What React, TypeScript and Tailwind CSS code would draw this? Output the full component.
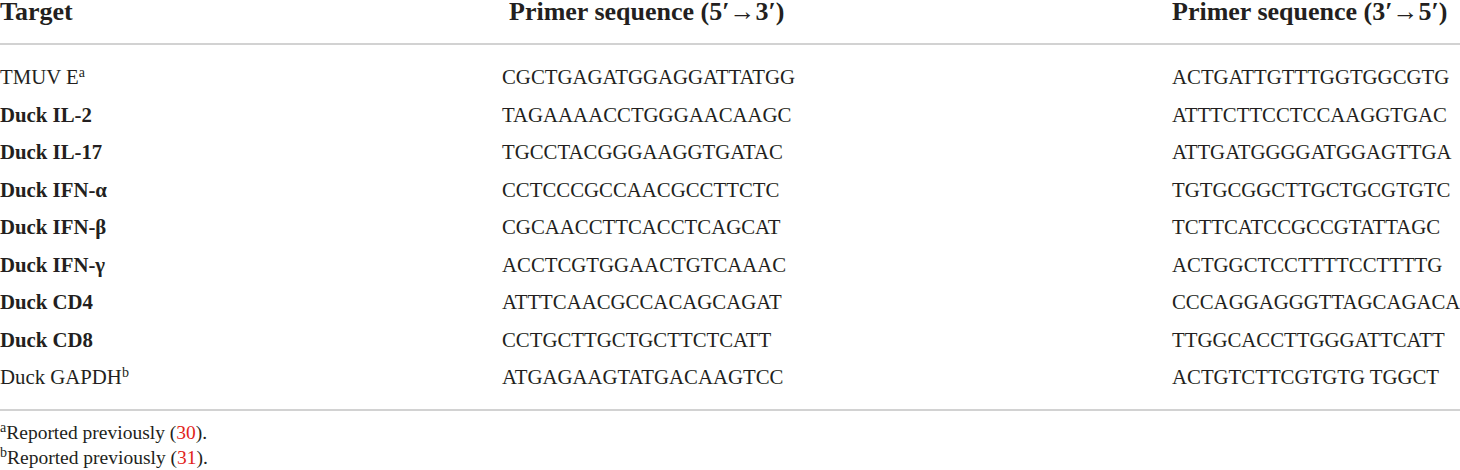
import React from "react";

type Row = { label: React.ReactNode; bold: boolean; f: string; r: string };

const rows: Row[] = [
  { label: <>TMUV E<sup className="text-[14px]">a</sup></>, bold: false, f: "CGCTGAGATGGAGGATTATGG", r: "ACTGATTGTTTGGTGGCGTG" },
  { label: "Duck IL-2", bold: true, f: "TAGAAAACCTGGGAACAAGC", r: "ATTTCTTCCTCCAAGGTGAC" },
  { label: "Duck IL-17", bold: true, f: "TGCCTACGGGAAGGTGATAC", r: "ATTGATGGGGATGGAGTTGA" },
  { label: "Duck IFN-α", bold: true, f: "CCTCCCGCCAACGCCTTCTC", r: "TGTGCGGCTTGCTGCGTGTC" },
  { label: "Duck IFN-β", bold: true, f: "CGCAACCTTCACCTCAGCAT", r: "TCTTCATCCGCCGTATTAGC" },
  { label: "Duck IFN-γ", bold: true, f: "ACCTCGTGGAACTGTCAAAC", r: "ACTGGCTCCTTTTCCTTTTG" },
  { label: "Duck CD4", bold: true, f: "ATTTCAACGCCACAGCAGAT", r: "CCCAGGAGGGTTAGCAGACA" },
  { label: "Duck CD8", bold: true, f: "CCTGCTTGCTGCTTCTCATT", r: "TTGGCACCTTGGGATTCATT" },
  { label: <>Duck GAPDH<sup className="text-[14px]">b</sup></>, bold: false, f: "ATGAGAAGTATGACAAGTCC", r: "ACTGTCTTCGTGTG TGGCT" },
];

export default function App() {
  return (
    <div
      className="w-[1460px] h-[470px] bg-white text-[#231f20] overflow-hidden"
      style={{ fontFamily: '"Liberation Serif", "Times New Roman", serif' }}
    >
      <div className="grid grid-cols-[502px_670px_1fr] h-[45px] border-b-2 border-[#d2d2d2] text-[26px] leading-[24px] font-bold">
        <div>Target</div>
        <div className="pl-[7px]">Primer sequence (5′→3′)</div>
        <div>Primer sequence (3′→5′)</div>
      </div>
      <div className="pt-[13px] pb-[13px] border-b-2 border-[#d2d2d2]">
        {rows.map((r, i) => (
          <div key={i} className="grid grid-cols-[502px_670px_1fr] h-[37.5px] text-[20.8px] leading-[37.5px]">
            <div className={r.bold ? "font-bold" : ""}>{r.label}</div>
            <div>{r.f}</div>
            <div className="whitespace-nowrap">{r.r}</div>
          </div>
        ))}
      </div>
      <div className="pt-[9px] text-[19.5px] leading-[25px]">
        <div>
          <sup className="text-[14px]">a</sup>Reported previously (<span className="text-[#e2231a]">30</span>).
        </div>
        <div>
          <sup className="text-[14px]">b</sup>Reported previously (<span className="text-[#e2231a]">31</span>).
        </div>
      </div>
    </div>
  );
}
